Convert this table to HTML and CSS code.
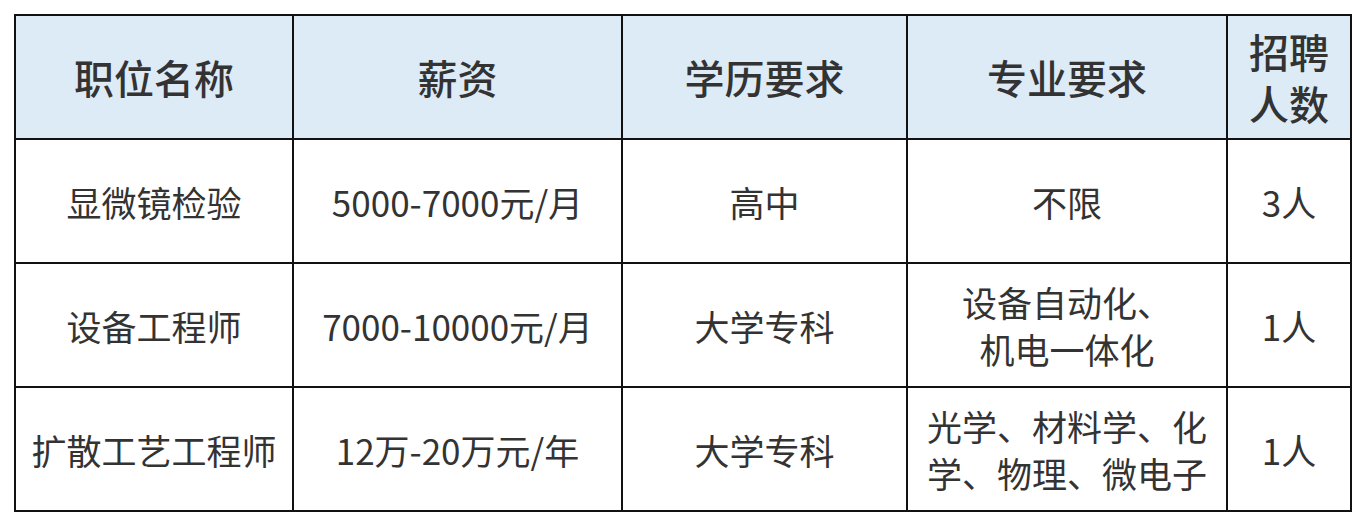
FILE: index.html
```html
<!DOCTYPE html>
<html lang="zh-CN">
<head>
<meta charset="utf-8">
<title>招聘信息</title>
<link rel="stylesheet" href="styles.css">
</head>
<body>
<div class="page">
  <table class="jobs">
    <colgroup>
      <col class="c1"><col class="c2"><col class="c3"><col class="c4"><col class="c5">
    </colgroup>
    <thead>
      <tr>
        <th>职位名称</th>
        <th>薪资</th>
        <th>学历要求</th>
        <th>专业要求</th>
        <th class="narrow">招聘<br>人数</th>
      </tr>
    </thead>
    <tbody>
      <tr>
        <td>显微镜检验</td>
        <td>5000-7000元/月</td>
        <td>高中</td>
        <td>不限</td>
        <td>3人</td>
      </tr>
      <tr>
        <td>设备工程师</td>
        <td>7000-10000元/月</td>
        <td>大学专科</td>
        <td class="multi">设备自动化、<br>机电一体化</td>
        <td>1人</td>
      </tr>
      <tr>
        <td>扩散工艺工程师</td>
        <td>12万-20万元/年</td>
        <td>大学专科</td>
        <td class="multi">光学、材料学、化学、物理、微电子</td>
        <td>1人</td>
      </tr>
    </tbody>
  </table>
</div>
</body>
</html>
```

FILE: styles.css
```css
html, body {
  margin: 0;
  padding: 0;
  background: #ffffff;
}

.page {
  padding: 14px 0 0 14px;
}

.jobs {
  border-collapse: collapse;
  table-layout: fixed;
  width: 1338px;
  font-family: "Noto Sans CJK SC", "Noto Sans", sans-serif;
  color: #333333;
}

.c1 { width: 278px; }
.c2 { width: 329px; }
.c3 { width: 285px; }
.c4 { width: 320px; }
.c5 { width: 124px; }

.jobs tr {
  height: 124px;
}

.jobs th,
.jobs td {
  border: 2px solid #111111;
  text-align: center;
  vertical-align: middle;
  padding: 0 10px;
}

.jobs th {
  background: #DDEBF7;
  font-size: 40px;
  font-weight: 500;
  line-height: 52px;
  color: #333333;
}

.jobs td {
  font-size: 35px;
  font-weight: 400;
  line-height: 47px;
  color: #333333;
}

.jobs th.narrow {
  padding: 0;
}
```
